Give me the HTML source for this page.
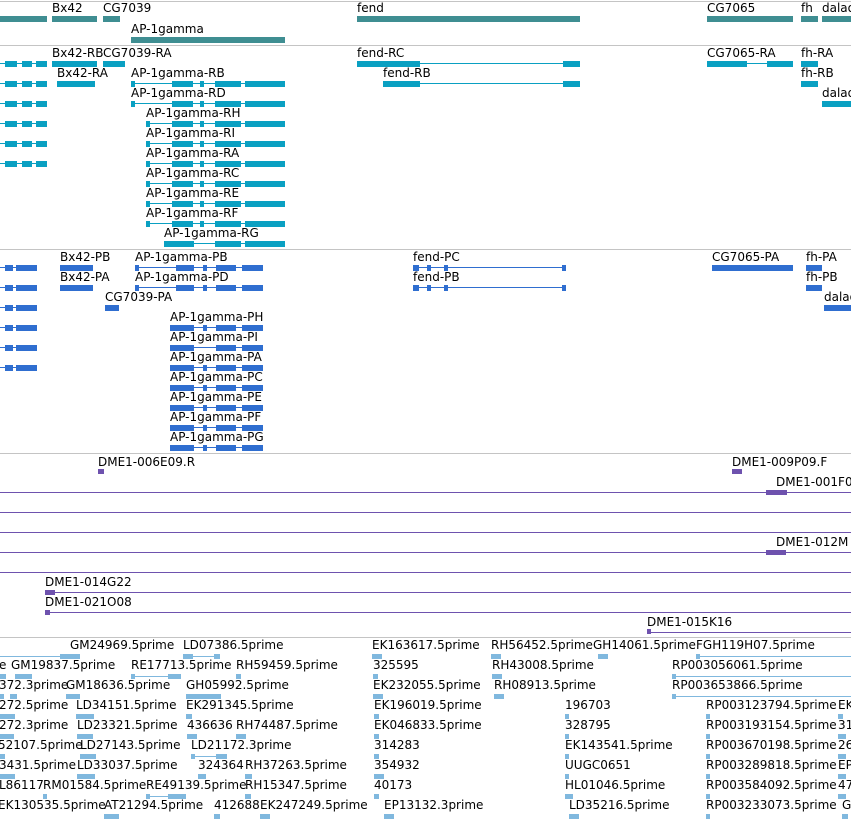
<!DOCTYPE html>
<html><head><meta charset="utf-8"><style>
body{margin:0;width:851px;height:821px;overflow:hidden;background:#fff;position:relative;font-family:"DejaVu Sans","Liberation Sans",sans-serif}
div{position:absolute}
.l{font-size:12px;line-height:14px;white-space:nowrap;color:#000}
.h{left:0;width:851px;height:1px;background:#c4c4c4}
.x{height:6px}
.s{height:5px}
.n{height:1px}
.g{background:#3f8e92}
.t{background:#0aa0c2}
.p{background:#2f6ed0}
.v{background:#6e52ae}
.e{background:#80b8de}
</style></head><body>
<div class="h" style="top:1px"></div>
<div class="h" style="top:45px"></div>
<div class="h" style="top:249px"></div>
<div class="h" style="top:453px"></div>
<div class="h" style="top:637px"></div>

<!-- genes -->
<div class="l" style="left:52px;top:1px">Bx42</div>
<div class="l" style="left:103px;top:1px">CG7039</div>
<div class="l" style="left:357px;top:1px">fend</div>
<div class="l" style="left:707px;top:1px">CG7065</div>
<div class="l" style="left:801px;top:1px">fh</div>
<div class="l" style="left:822px;top:1px">dalao</div>
<div class="l" style="left:131px;top:22px">AP-1gamma</div>
<div class="x g" style="left:0;width:47px;top:16px"></div>
<div class="x g" style="left:52px;width:45px;top:16px"></div>
<div class="x g" style="left:103px;width:17px;top:16px"></div>
<div class="x g" style="left:357px;width:223px;top:16px"></div>
<div class="x g" style="left:707px;width:86px;top:16px"></div>
<div class="x g" style="left:801px;width:17px;top:16px"></div>
<div class="x g" style="left:822px;width:29px;top:16px"></div>
<div class="x g" style="left:131px;width:154px;top:37px"></div>

<!-- transcripts -->
<div class="l" style="left:52px;top:46px">Bx42-RB</div>
<div class="l" style="left:103px;top:46px">CG7039-RA</div>
<div class="l" style="left:357px;top:46px">fend-RC</div>
<div class="l" style="left:707px;top:46px">CG7065-RA</div>
<div class="l" style="left:801px;top:46px">fh-RA</div>
<div class="l" style="left:57px;top:66px">Bx42-RA</div>
<div class="l" style="left:131px;top:66px">AP-1gamma-RB</div>
<div class="l" style="left:383px;top:66px">fend-RB</div>
<div class="l" style="left:801px;top:66px">fh-RB</div>
<div class="l" style="left:131px;top:86px">AP-1gamma-RD</div>
<div class="l" style="left:822px;top:86px">dalao</div>
<div class="l" style="left:146px;top:106px">AP-1gamma-RH</div>
<div class="l" style="left:146px;top:126px">AP-1gamma-RI</div>
<div class="l" style="left:146px;top:146px">AP-1gamma-RA</div>
<div class="l" style="left:146px;top:166px">AP-1gamma-RC</div>
<div class="l" style="left:146px;top:186px">AP-1gamma-RE</div>
<div class="l" style="left:146px;top:206px">AP-1gamma-RF</div>
<div class="l" style="left:164px;top:226px">AP-1gamma-RG</div>

<!-- left partial transcript bars -->
<div class="n t" style="left:0;width:47px;top:63px"></div><div class="x t" style="left:5px;width:12px;top:61px"></div><div class="x t" style="left:22px;width:10px;top:61px"></div><div class="x t" style="left:36px;width:11px;top:61px"></div>
<div class="n t" style="left:0;width:47px;top:83px"></div><div class="x t" style="left:5px;width:12px;top:81px"></div><div class="x t" style="left:22px;width:10px;top:81px"></div><div class="x t" style="left:36px;width:11px;top:81px"></div>
<div class="n t" style="left:0;width:47px;top:103px"></div><div class="x t" style="left:5px;width:12px;top:101px"></div><div class="x t" style="left:22px;width:10px;top:101px"></div><div class="x t" style="left:36px;width:11px;top:101px"></div>
<div class="n t" style="left:0;width:47px;top:123px"></div><div class="x t" style="left:5px;width:12px;top:121px"></div><div class="x t" style="left:22px;width:10px;top:121px"></div><div class="x t" style="left:36px;width:11px;top:121px"></div>
<div class="n t" style="left:0;width:47px;top:143px"></div><div class="x t" style="left:5px;width:12px;top:141px"></div><div class="x t" style="left:22px;width:10px;top:141px"></div><div class="x t" style="left:36px;width:11px;top:141px"></div>
<div class="n t" style="left:0;width:47px;top:163px"></div><div class="x t" style="left:5px;width:12px;top:161px"></div><div class="x t" style="left:22px;width:10px;top:161px"></div><div class="x t" style="left:36px;width:11px;top:161px"></div>

<div class="x t" style="left:52px;width:45px;top:61px"></div>
<div class="x t" style="left:103px;width:22px;top:61px"></div>
<div class="x t" style="left:57px;width:38px;top:81px"></div>
<!-- fend -->
<div class="x t" style="left:357px;width:63px;top:61px"></div><div class="n t" style="left:420px;width:160px;top:63px"></div><div class="x t" style="left:563px;width:17px;top:61px"></div>
<div class="x t" style="left:383px;width:37px;top:81px"></div><div class="n t" style="left:420px;width:160px;top:83px"></div><div class="x t" style="left:563px;width:17px;top:81px"></div>
<!-- CG7065 fh dalao -->
<div class="x t" style="left:707px;width:40px;top:61px"></div><div class="n t" style="left:747px;width:46px;top:63px"></div><div class="x t" style="left:767px;width:26px;top:61px"></div>
<div class="x t" style="left:801px;width:17px;top:61px"></div>
<div class="x t" style="left:801px;width:17px;top:81px"></div>
<div class="x t" style="left:822px;width:29px;top:101px"></div>
<!-- AP-1gamma transcripts -->
<div class="n t" style="left:131px;width:154px;top:83px"></div><div class="x t" style="left:131px;width:4px;top:81px"></div><div class="x t" style="left:172px;width:21px;top:81px"></div><div class="x t" style="left:200px;width:4px;top:81px"></div><div class="x t" style="left:215px;width:26px;top:81px"></div><div class="x t" style="left:245px;width:40px;top:81px"></div>
<div class="n t" style="left:131px;width:154px;top:103px"></div><div class="x t" style="left:131px;width:4px;top:101px"></div><div class="x t" style="left:172px;width:21px;top:101px"></div><div class="x t" style="left:200px;width:4px;top:101px"></div><div class="x t" style="left:215px;width:26px;top:101px"></div><div class="x t" style="left:245px;width:40px;top:101px"></div>
<div class="n t" style="left:146px;width:139px;top:123px"></div><div class="x t" style="left:146px;width:4px;top:121px"></div><div class="x t" style="left:172px;width:21px;top:121px"></div><div class="x t" style="left:200px;width:4px;top:121px"></div><div class="x t" style="left:215px;width:26px;top:121px"></div><div class="x t" style="left:245px;width:40px;top:121px"></div>
<div class="n t" style="left:146px;width:139px;top:143px"></div><div class="x t" style="left:146px;width:4px;top:141px"></div><div class="x t" style="left:172px;width:21px;top:141px"></div><div class="x t" style="left:200px;width:4px;top:141px"></div><div class="x t" style="left:215px;width:26px;top:141px"></div><div class="x t" style="left:245px;width:40px;top:141px"></div>
<div class="n t" style="left:146px;width:139px;top:163px"></div><div class="x t" style="left:146px;width:4px;top:161px"></div><div class="x t" style="left:172px;width:21px;top:161px"></div><div class="x t" style="left:200px;width:4px;top:161px"></div><div class="x t" style="left:215px;width:26px;top:161px"></div><div class="x t" style="left:245px;width:40px;top:161px"></div>
<div class="n t" style="left:146px;width:139px;top:183px"></div><div class="x t" style="left:146px;width:4px;top:181px"></div><div class="x t" style="left:172px;width:21px;top:181px"></div><div class="x t" style="left:200px;width:4px;top:181px"></div><div class="x t" style="left:215px;width:26px;top:181px"></div><div class="x t" style="left:245px;width:40px;top:181px"></div>
<div class="n t" style="left:146px;width:139px;top:203px"></div><div class="x t" style="left:146px;width:4px;top:201px"></div><div class="x t" style="left:172px;width:21px;top:201px"></div><div class="x t" style="left:200px;width:4px;top:201px"></div><div class="x t" style="left:215px;width:26px;top:201px"></div><div class="x t" style="left:245px;width:40px;top:201px"></div>
<div class="n t" style="left:146px;width:139px;top:223px"></div><div class="x t" style="left:146px;width:4px;top:221px"></div><div class="x t" style="left:172px;width:21px;top:221px"></div><div class="x t" style="left:200px;width:4px;top:221px"></div><div class="x t" style="left:215px;width:26px;top:221px"></div><div class="x t" style="left:245px;width:40px;top:221px"></div>
<div class="n t" style="left:164px;width:121px;top:243px"></div><div class="x t" style="left:164px;width:30px;top:241px"></div><div class="x t" style="left:215px;width:26px;top:241px"></div><div class="x t" style="left:245px;width:40px;top:241px"></div>

<!-- proteins -->
<div class="l" style="left:60px;top:250px">Bx42-PB</div>
<div class="l" style="left:135px;top:250px">AP-1gamma-PB</div>
<div class="l" style="left:413px;top:250px">fend-PC</div>
<div class="l" style="left:712px;top:250px">CG7065-PA</div>
<div class="l" style="left:806px;top:250px">fh-PA</div>
<div class="l" style="left:60px;top:270px">Bx42-PA</div>
<div class="l" style="left:135px;top:270px">AP-1gamma-PD</div>
<div class="l" style="left:413px;top:270px">fend-PB</div>
<div class="l" style="left:806px;top:270px">fh-PB</div>
<div class="l" style="left:105px;top:290px">CG7039-PA</div>
<div class="l" style="left:824px;top:290px">dalao</div>
<div class="l" style="left:170px;top:310px">AP-1gamma-PH</div>
<div class="l" style="left:170px;top:330px">AP-1gamma-PI</div>
<div class="l" style="left:170px;top:350px">AP-1gamma-PA</div>
<div class="l" style="left:170px;top:370px">AP-1gamma-PC</div>
<div class="l" style="left:170px;top:390px">AP-1gamma-PE</div>
<div class="l" style="left:170px;top:410px">AP-1gamma-PF</div>
<div class="l" style="left:170px;top:430px">AP-1gamma-PG</div>

<div class="n p" style="left:0;width:37px;top:267px"></div><div class="x p" style="left:5px;width:8px;top:265px"></div><div class="x p" style="left:16px;width:21px;top:265px"></div>
<div class="n p" style="left:0;width:37px;top:287px"></div><div class="x p" style="left:5px;width:8px;top:285px"></div><div class="x p" style="left:16px;width:21px;top:285px"></div>
<div class="n p" style="left:0;width:37px;top:307px"></div><div class="x p" style="left:5px;width:8px;top:305px"></div><div class="x p" style="left:16px;width:21px;top:305px"></div>
<div class="n p" style="left:0;width:37px;top:327px"></div><div class="x p" style="left:5px;width:8px;top:325px"></div><div class="x p" style="left:16px;width:21px;top:325px"></div>
<div class="n p" style="left:0;width:37px;top:347px"></div><div class="x p" style="left:5px;width:8px;top:345px"></div><div class="x p" style="left:16px;width:21px;top:345px"></div>
<div class="n p" style="left:0;width:37px;top:367px"></div><div class="x p" style="left:5px;width:8px;top:365px"></div><div class="x p" style="left:16px;width:21px;top:365px"></div>

<div class="x p" style="left:60px;width:33px;top:265px"></div>
<div class="x p" style="left:60px;width:33px;top:285px"></div>
<div class="x p" style="left:105px;width:14px;top:305px"></div>
<div class="n p" style="left:413px;width:153px;top:267px"></div><div class="x p" style="left:413px;width:6px;top:265px"></div><div class="x p" style="left:427px;width:4px;top:265px"></div><div class="x p" style="left:444px;width:4px;top:265px"></div><div class="x p" style="left:562px;width:4px;top:265px"></div>
<div class="n p" style="left:413px;width:153px;top:287px"></div><div class="x p" style="left:413px;width:6px;top:285px"></div><div class="x p" style="left:427px;width:4px;top:285px"></div><div class="x p" style="left:444px;width:4px;top:285px"></div><div class="x p" style="left:562px;width:4px;top:285px"></div>
<div class="x p" style="left:712px;width:81px;top:265px"></div>
<div class="x p" style="left:806px;width:16px;top:265px"></div>
<div class="x p" style="left:806px;width:16px;top:285px"></div>
<div class="x p" style="left:824px;width:27px;top:305px"></div>

<div class="n p" style="left:135px;width:128px;top:267px"></div><div class="x p" style="left:135px;width:4px;top:265px"></div><div class="x p" style="left:176px;width:18px;top:265px"></div><div class="x p" style="left:203px;width:4px;top:265px"></div><div class="x p" style="left:216px;width:20px;top:265px"></div><div class="x p" style="left:242px;width:21px;top:265px"></div>
<div class="n p" style="left:135px;width:128px;top:287px"></div><div class="x p" style="left:135px;width:4px;top:285px"></div><div class="x p" style="left:176px;width:18px;top:285px"></div><div class="x p" style="left:203px;width:4px;top:285px"></div><div class="x p" style="left:216px;width:20px;top:285px"></div><div class="x p" style="left:242px;width:21px;top:285px"></div>
<div class="n p" style="left:170px;width:93px;top:327px"></div><div class="x p" style="left:170px;width:24px;top:325px"></div><div class="x p" style="left:203px;width:4px;top:325px"></div><div class="x p" style="left:216px;width:20px;top:325px"></div><div class="x p" style="left:242px;width:21px;top:325px"></div>
<div class="n p" style="left:170px;width:93px;top:347px"></div><div class="x p" style="left:170px;width:24px;top:345px"></div><div class="x p" style="left:216px;width:20px;top:345px"></div><div class="x p" style="left:242px;width:21px;top:345px"></div>
<div class="n p" style="left:170px;width:93px;top:367px"></div><div class="x p" style="left:170px;width:24px;top:365px"></div><div class="x p" style="left:203px;width:4px;top:365px"></div><div class="x p" style="left:216px;width:20px;top:365px"></div><div class="x p" style="left:242px;width:21px;top:365px"></div>
<div class="n p" style="left:170px;width:93px;top:387px"></div><div class="x p" style="left:170px;width:24px;top:385px"></div><div class="x p" style="left:203px;width:4px;top:385px"></div><div class="x p" style="left:216px;width:20px;top:385px"></div><div class="x p" style="left:242px;width:21px;top:385px"></div>
<div class="n p" style="left:170px;width:93px;top:407px"></div><div class="x p" style="left:170px;width:24px;top:405px"></div><div class="x p" style="left:203px;width:4px;top:405px"></div><div class="x p" style="left:216px;width:20px;top:405px"></div><div class="x p" style="left:242px;width:21px;top:405px"></div>
<div class="n p" style="left:170px;width:93px;top:427px"></div><div class="x p" style="left:170px;width:24px;top:425px"></div><div class="x p" style="left:203px;width:4px;top:425px"></div><div class="x p" style="left:216px;width:20px;top:425px"></div><div class="x p" style="left:242px;width:21px;top:425px"></div>
<div class="n p" style="left:170px;width:93px;top:447px"></div><div class="x p" style="left:170px;width:24px;top:445px"></div><div class="x p" style="left:203px;width:4px;top:445px"></div><div class="x p" style="left:216px;width:20px;top:445px"></div><div class="x p" style="left:242px;width:21px;top:445px"></div>

<!-- clones -->
<div class="l" style="left:98px;top:455px">DME1-006E09.R</div>
<div class="l" style="left:732px;top:455px">DME1-009P09.F</div>
<div class="l" style="left:776px;top:475px">DME1-001F0</div>
<div class="l" style="left:776px;top:535px">DME1-012M</div>
<div class="l" style="left:45px;top:575px">DME1-014G22</div>
<div class="l" style="left:45px;top:595px">DME1-021O08</div>
<div class="l" style="left:647px;top:615px">DME1-015K16</div>
<div class="s v" style="left:98px;width:6px;top:469px"></div>
<div class="s v" style="left:732px;width:10px;top:469px"></div>
<div class="n v" style="left:0;width:851px;top:492px"></div><div class="s v" style="left:766px;width:21px;top:490px"></div>
<div class="n v" style="left:0;width:851px;top:512px"></div>
<div class="n v" style="left:0;width:851px;top:532px"></div>
<div class="n v" style="left:0;width:851px;top:552px"></div><div class="s v" style="left:766px;width:20px;top:550px"></div>
<div class="n v" style="left:0;width:851px;top:572px"></div>
<div class="n v" style="left:45px;width:806px;top:592px"></div><div class="s v" style="left:45px;width:10px;top:590px"></div>
<div class="n v" style="left:45px;width:806px;top:612px"></div><div class="s v" style="left:45px;width:5px;top:610px"></div>
<div class="n v" style="left:647px;width:204px;top:632px"></div><div class="s v" style="left:647px;width:4px;top:629px"></div>

<!-- ESTs -->
<div class="l" style="left:70px;top:638px">GM24969.5prime</div>
<div class="l" style="left:183px;top:638px">LD07386.5prime</div>
<div class="l" style="left:372px;top:638px">EK163617.5prime</div>
<div class="l" style="left:491px;top:638px">RH56452.5prime</div>
<div class="l" style="left:593px;top:638px">GH14061.5prime</div>
<div class="l" style="left:696px;top:638px">FGH119H07.5prime</div>

<div class="l" style="left:-1px;top:658px">e</div>
<div class="l" style="left:11px;top:658px">GM19837.5prime</div>
<div class="l" style="left:131px;top:658px">RE17713.5prime</div>
<div class="l" style="left:236px;top:658px">RH59459.5prime</div>
<div class="l" style="left:373px;top:658px">325595</div>
<div class="l" style="left:492px;top:658px">RH43008.5prime</div>
<div class="l" style="left:672px;top:658px">RP003056061.5prime</div>

<div class="l" style="left:-1px;top:678px">372.3prime</div>
<div class="l" style="left:66px;top:678px">GM18636.5prime</div>
<div class="l" style="left:186px;top:678px">GH05992.5prime</div>
<div class="l" style="left:373px;top:678px">EK232055.5prime</div>
<div class="l" style="left:494px;top:678px">RH08913.5prime</div>
<div class="l" style="left:672px;top:678px">RP003653866.5prime</div>

<div class="l" style="left:-1px;top:698px">272.5prime</div>
<div class="l" style="left:76px;top:698px">LD34151.5prime</div>
<div class="l" style="left:186px;top:698px">EK291345.5prime</div>
<div class="l" style="left:374px;top:698px">EK196019.5prime</div>
<div class="l" style="left:565px;top:698px">196703</div>
<div class="l" style="left:706px;top:698px">RP003123794.5prime</div>
<div class="l" style="left:838px;top:698px">EK</div>

<div class="l" style="left:-1px;top:718px">272.3prime</div>
<div class="l" style="left:77px;top:718px">LD23321.5prime</div>
<div class="l" style="left:187px;top:718px">436636</div>
<div class="l" style="left:236px;top:718px">RH74487.5prime</div>
<div class="l" style="left:374px;top:718px">EK046833.5prime</div>
<div class="l" style="left:565px;top:718px">328795</div>
<div class="l" style="left:706px;top:718px">RP003193154.5prime</div>
<div class="l" style="left:838px;top:718px">31</div>

<div class="l" style="left:-2px;top:738px">52107.5prime</div>
<div class="l" style="left:80px;top:738px">LD27143.5prime</div>
<div class="l" style="left:191px;top:738px">LD21172.3prime</div>
<div class="l" style="left:374px;top:738px">314283</div>
<div class="l" style="left:565px;top:738px">EK143541.5prime</div>
<div class="l" style="left:706px;top:738px">RP003670198.5prime</div>
<div class="l" style="left:838px;top:738px">26</div>

<div class="l" style="left:-1px;top:758px">3431.5prime</div>
<div class="l" style="left:77px;top:758px">LD33037.5prime</div>
<div class="l" style="left:198px;top:758px">324364</div>
<div class="l" style="left:245px;top:758px">RH37263.5prime</div>
<div class="l" style="left:374px;top:758px">354932</div>
<div class="l" style="left:565px;top:758px">UUGC0651</div>
<div class="l" style="left:706px;top:758px">RP003289818.5prime</div>
<div class="l" style="left:838px;top:758px">EP</div>

<div class="l" style="left:-1px;top:778px">L86117</div>
<div class="l" style="left:43px;top:778px">RM01584.5prime</div>
<div class="l" style="left:146px;top:778px">RE49139.5prime</div>
<div class="l" style="left:245px;top:778px">RH15347.5prime</div>
<div class="l" style="left:374px;top:778px">40173</div>
<div class="l" style="left:565px;top:778px">HL01046.5prime</div>
<div class="l" style="left:706px;top:778px">RP003584092.5prime</div>
<div class="l" style="left:838px;top:778px">47</div>

<div class="l" style="left:-2px;top:798px">EK130535.5prime</div>
<div class="l" style="left:104px;top:798px">AT21294.5prime</div>
<div class="l" style="left:214px;top:798px">412688</div>
<div class="l" style="left:260px;top:798px">EK247249.5prime</div>
<div class="l" style="left:384px;top:798px">EP13132.3prime</div>
<div class="l" style="left:569px;top:798px">LD35216.5prime</div>
<div class="l" style="left:706px;top:798px">RP003233073.5prime</div>
<div class="l" style="left:842px;top:798px">G</div>

<!-- EST features -->
<div class="n e" style="left:0;width:62px;top:656px"></div><div class="s e" style="left:60px;width:20px;top:654px"></div>
<div class="s e" style="left:183px;width:10px;top:654px"></div><div class="n e" style="left:183px;width:36px;top:656px"></div><div class="s e" style="left:214px;width:6px;top:654px"></div>
<div class="s e" style="left:372px;width:10px;top:654px"></div>
<div class="s e" style="left:491px;width:10px;top:654px"></div>
<div class="s e" style="left:598px;width:10px;top:654px"></div>
<div class="n e" style="left:696px;width:155px;top:656px"></div><div class="s e" style="left:696px;width:4px;top:654px"></div>

<div class="s e" style="left:0;width:6px;top:674px"></div><div class="s e" style="left:15px;width:17px;top:674px"></div>
<div class="n e" style="left:131px;width:50px;top:676px"></div><div class="s e" style="left:131px;width:4px;top:674px"></div><div class="s e" style="left:168px;width:13px;top:674px"></div>
<div class="s e" style="left:236px;width:5px;top:674px"></div>
<div class="s e" style="left:373px;width:5px;top:674px"></div>
<div class="s e" style="left:492px;width:10px;top:674px"></div>
<div class="n e" style="left:672px;width:179px;top:676px"></div><div class="s e" style="left:672px;width:4px;top:674px"></div>

<div class="s e" style="left:0;width:4px;top:694px"></div><div class="s e" style="left:10px;width:7px;top:694px"></div>
<div class="s e" style="left:66px;width:14px;top:694px"></div>
<div class="s e" style="left:186px;width:35px;top:694px"></div>
<div class="s e" style="left:373px;width:10px;top:694px"></div>
<div class="s e" style="left:494px;width:10px;top:694px"></div>
<div class="n e" style="left:672px;width:179px;top:696px"></div><div class="s e" style="left:672px;width:4px;top:694px"></div>

<div class="s e" style="left:0;width:15px;top:714px"></div>
<div class="s e" style="left:76px;width:18px;top:714px"></div>
<div class="s e" style="left:186px;width:6px;top:714px"></div>
<div class="s e" style="left:374px;width:5px;top:714px"></div>
<div class="s e" style="left:565px;width:4px;top:714px"></div>
<div class="s e" style="left:706px;width:4px;top:714px"></div>
<div class="s e" style="left:838px;width:5px;top:714px"></div>

<div class="s e" style="left:0;width:14px;top:734px"></div>
<div class="s e" style="left:77px;width:16px;top:734px"></div>
<div class="s e" style="left:187px;width:10px;top:734px"></div><div class="s e" style="left:236px;width:10px;top:734px"></div>
<div class="s e" style="left:374px;width:5px;top:734px"></div>
<div class="s e" style="left:565px;width:4px;top:734px"></div>
<div class="s e" style="left:706px;width:4px;top:734px"></div>
<div class="s e" style="left:838px;width:8px;top:734px"></div>

<div class="s e" style="left:0;width:5px;top:754px"></div>
<div class="s e" style="left:80px;width:16px;top:754px"></div>
<div class="n e" style="left:191px;width:36px;top:756px"></div><div class="s e" style="left:191px;width:4px;top:754px"></div><div class="s e" style="left:216px;width:11px;top:754px"></div>
<div class="s e" style="left:374px;width:5px;top:754px"></div>
<div class="s e" style="left:565px;width:4px;top:754px"></div>
<div class="s e" style="left:706px;width:4px;top:754px"></div>
<div class="s e" style="left:838px;width:8px;top:754px"></div>

<div class="s e" style="left:0;width:15px;top:774px"></div>
<div class="s e" style="left:77px;width:18px;top:774px"></div>
<div class="s e" style="left:198px;width:8px;top:774px"></div><div class="s e" style="left:245px;width:7px;top:774px"></div>
<div class="s e" style="left:374px;width:10px;top:774px"></div>
<div class="s e" style="left:565px;width:4px;top:774px"></div>
<div class="s e" style="left:706px;width:4px;top:774px"></div>
<div class="s e" style="left:838px;width:8px;top:774px"></div>

<div class="s e" style="left:43px;width:4px;top:794px"></div>
<div class="n e" style="left:146px;width:40px;top:796px"></div><div class="s e" style="left:146px;width:4px;top:794px"></div><div class="s e" style="left:168px;width:18px;top:794px"></div>
<div class="s e" style="left:245px;width:6px;top:794px"></div>
<div class="s e" style="left:374px;width:5px;top:794px"></div>
<div class="s e" style="left:565px;width:8px;top:794px"></div>
<div class="s e" style="left:706px;width:4px;top:794px"></div>
<div class="s e" style="left:838px;width:8px;top:794px"></div>

<div class="s e" style="left:104px;width:15px;top:814px"></div>
<div class="s e" style="left:214px;width:6px;top:814px"></div><div class="s e" style="left:260px;width:10px;top:814px"></div>
<div class="s e" style="left:384px;width:10px;top:814px"></div>
<div class="s e" style="left:569px;width:10px;top:814px"></div>
<div class="s e" style="left:706px;width:4px;top:814px"></div>
<div class="s e" style="left:842px;width:6px;top:814px"></div>
</body></html>
